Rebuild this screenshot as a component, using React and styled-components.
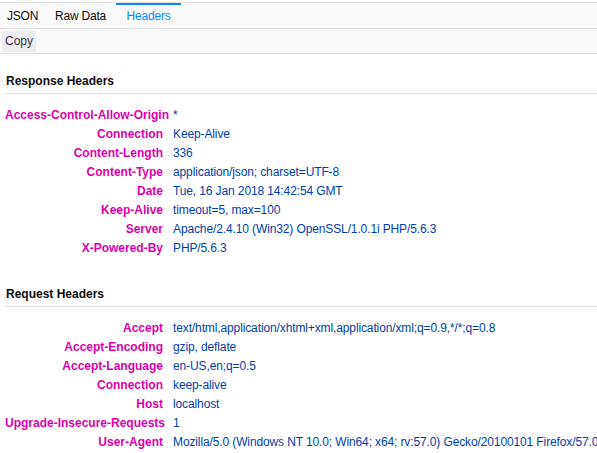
import React from "react";
import styled, { createGlobalStyle } from "styled-components";

const GlobalStyle = createGlobalStyle`
  body {
    margin: 0;
    background: #fff;
    font-family: "Liberation Sans", Arial, sans-serif;
    font-size: 12px;
    color: #0c0c0d;
  }
`;

const responseHeaders = [
  ["Access-Control-Allow-Origin", "*"],
  ["Connection", "Keep-Alive"],
  ["Content-Length", "336"],
  ["Content-Type", "application/json; charset=UTF-8"],
  ["Date", "Tue, 16 Jan 2018 14:42:54 GMT"],
  ["Keep-Alive", "timeout=5, max=100"],
  ["Server", "Apache/2.4.10 (Win32) OpenSSL/1.0.1i PHP/5.6.3"],
  ["X-Powered-By", "PHP/5.6.3"],
];

const requestHeaders = [
  ["Accept", "text/html,application/xhtml+xml,application/xml;q=0.9,*/*;q=0.8"],
  ["Accept-Encoding", "gzip, deflate"],
  ["Accept-Language", "en-US,en;q=0.5"],
  ["Connection", "keep-alive"],
  ["Host", "localhost"],
  ["Upgrade-Insecure-Requests", "1"],
  ["User-Agent", "Mozilla/5.0 (Windows NT 10.0; Win64; x64; rv:57.0) Gecko/20100101 Firefox/57.0"],
];

// tab widths taken from the devtools tab strip
const tabs = [
  { label: "JSON", width: 45 },
  { label: "Raw Data", width: 71 },
  { label: "Headers", width: 65 },
];

const HeaderSection = ({ title, items, first }) => (
  <Section $first={first}>
    <SectionTitle>{title}</SectionTitle>
    <HeaderTable>
      {items.map(([name, value]) => (
        <React.Fragment key={name}>
          <HeaderName>{name}</HeaderName>
          <HeaderValue>{value}</HeaderValue>
        </React.Fragment>
      ))}
    </HeaderTable>
  </Section>
);

const App = () => {
  return (
    <React.Fragment>
      <GlobalStyle />
      <Page>
        <TabBar>
          {tabs.map((t) => (
            <Tab key={t.label} $selected={t.label === "Headers"} $width={t.width}>
              {t.label}
            </Tab>
          ))}
        </TabBar>
        <Toolbar>
          <ToolButton>Copy</ToolButton>
        </Toolbar>
        <HeaderSection title="Response Headers" items={responseHeaders} first />
        <HeaderSection title="Request Headers" items={requestHeaders} />
      </Page>
    </React.Fragment>
  );
};

const Page = styled.div`
  padding-top: 2px;
`;

const TabBar = styled.div`
  display: flex;
  height: 25px;
  background-color: #f9f9fa;
  border-top: 1px solid #e0e0e2;
  border-bottom: 1px solid #e0e0e2;
`;

const Tab = styled.div`
  position: relative;
  display: flex;
  align-items: center;
  justify-content: center;
  width: ${(p) => p.$width}px;
  letter-spacing: -0.2px;
  color: ${(p) => (p.$selected ? "#0a84ff" : "#0c0c0d")};

  &::before {
    content: "";
    display: ${(p) => (p.$selected ? "block" : "none")};
    position: absolute;
    top: 0;
    left: 0;
    right: 0;
    height: 2px;
    background-color: #0a84ff;
  }
`;

const Toolbar = styled.div`
  display: flex;
  align-items: center;
  height: 24px;
  padding-left: 2px;
  background-color: #f9f9fa;
  border-bottom: 1px solid #e0e0e2;
`;

const ToolButton = styled.div`
  display: flex;
  align-items: center;
  height: 21px;
  padding: 0 3px;
  border-radius: 2px;
  background-color: #ededf0;
  color: #38383d;
`;

const Section = styled.div`
  padding: ${(p) => (p.$first ? "19px" : "28px")} 0 0 5px;
`;

const SectionTitle = styled.div`
  font-weight: bold;
  line-height: 16px;
  padding: 0 0 4px 1px;
  border-bottom: 1px solid #e0e0e2;
`;

const HeaderTable = styled.div`
  display: grid;
  grid-template-columns: 158px 1fr;
  column-gap: 10px;
  margin-top: 12px;
`;

const HeaderName = styled.div`
  line-height: 19px;
  text-align: right;
  font-weight: bold;
  color: #dd00a9;
  white-space: nowrap;
`;

const HeaderValue = styled.div`
  line-height: 19px;
  letter-spacing: -0.12px;
  color: #003eaa;
  white-space: nowrap;
`;

export default App;
